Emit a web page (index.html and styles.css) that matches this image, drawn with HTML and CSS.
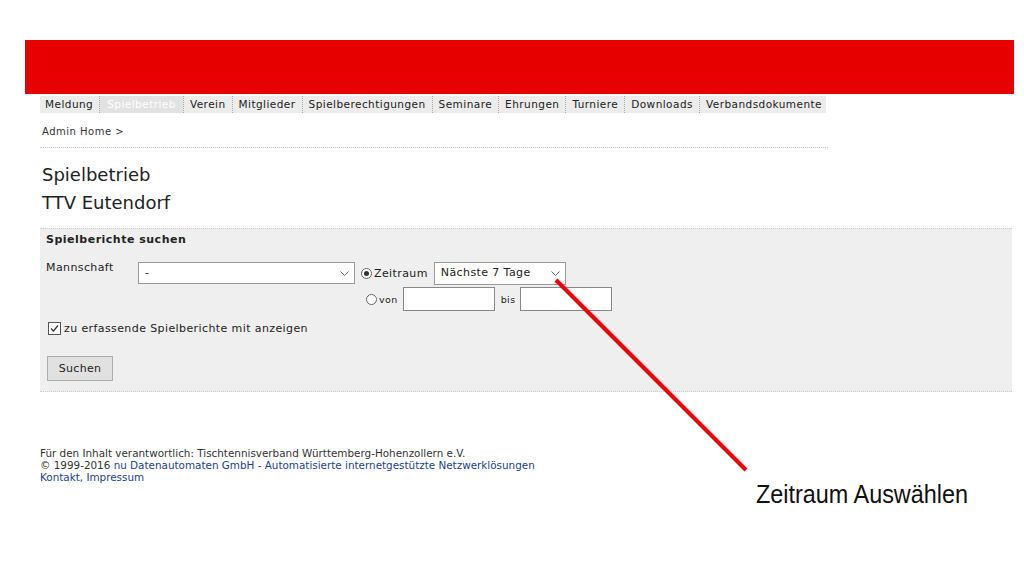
FILE: index.html
```html
<!DOCTYPE html>
<html lang="de">
<head>
    <meta charset="UTF-8">
    <title>Spielbetrieb - TTV Eutendorf</title>
    <link rel="stylesheet" href="styles.css">
</head>
<body>
    <div class="page">
        <div class="banner"></div>
        <div class="content">
            <ul class="nav">
                <li>Meldung</li>
                <li class="active">Spielbetrieb</li>
                <li>Verein</li>
                <li>Mitglieder</li>
                <li>Spielberechtigungen</li>
                <li>Seminare</li>
                <li>Ehrungen</li>
                <li>Turniere</li>
                <li>Downloads</li>
                <li>Verbandsdokumente</li>
            </ul>
            <div class="breadcrumb">Admin Home &gt;</div>

            <h1 class="title">Spielbetrieb<br>TTV Eutendorf</h1>

            <div class="search-box">
                <h2>Spielberichte suchen</h2>
                <div class="search-row">
                    <span class="label">Mannschaft</span>
                    <div class="select wide">-
                        <svg class="chev" width="9" height="6" viewBox="0 0 9 6"><path d="M0.5 0.5 L4.5 4.5 L8.5 0.5" fill="none" stroke="#666" stroke-width="1"/></svg>
                    </div>
                    <div class="period">
                        <div class="period-line">
                            <span class="radio checked"></span>
                            <span class="small">Zeitraum</span>
                            <div class="select period-select">Nächste 7 Tage
                                <svg class="chev" width="9" height="6" viewBox="0 0 9 6"><path d="M0.5 0.5 L4.5 4.5 L8.5 0.5" fill="none" stroke="#666" stroke-width="1"/></svg>
                            </div>
                        </div>
                        <div class="period-line second">
                            <span class="radio"></span>
                            <span class="tiny">von</span>
                            <div class="textbox"></div>
                            <span class="tiny bis">bis</span>
                            <div class="textbox"></div>
                        </div>
                    </div>
                </div>
                <div class="check-row">
                    <span class="checkbox">
                        <svg width="11" height="11" viewBox="0 0 11 11"><path d="M2 5.5 L4.5 8 L9 2.5" fill="none" stroke="#333" stroke-width="1.2"/></svg>
                    </span>
                    zu erfassende Spielberichte mit anzeigen
                </div>
                <div class="button-row">
                    <button class="btn">Suchen</button>
                </div>
            </div>

            <div class="footer">
                <div>Für den Inhalt verantwortlich: Tischtennisverband Württemberg-Hohenzollern e.V.</div>
                <div><span class="dark">© 1999-2016</span> nu Datenautomaten GmbH - Automatisierte internetgestützte Netzwerklösungen</div>
                <div>Kontakt, Impressum</div>
            </div>
        </div>

        <svg class="pointer" width="1024" height="576" viewBox="0 0 1024 576">
            <line x1="556" y1="280" x2="746" y2="470" stroke="#f00000" stroke-width="4"/>
        </svg>
        <div class="note">Zeitraum Auswählen</div>
    </div>
</body>
</html>
```
FILE: styles.css
```css
body {
    margin: 0;
    background: #fff;
    font-family: "DejaVu Sans", Verdana, sans-serif;
    color: #222;
}

.page {
    position: relative;
    width: 1024px;
    height: 576px;
    padding-top: 40px;
    box-sizing: border-box;
    overflow: hidden;
}

.banner {
    margin-left: 25px;
    width: 989px;
    height: 54px;
    background-color: #e60000;
}

.content {
    padding-left: 40px;
}

.nav {
    display: flex;
    list-style: none;
    margin: 2px 0 0 0;
    padding: 0;
    width: 786px;
    height: 17px;
    background-color: #ececec;
    font-size: 10.5px;
    letter-spacing: 0.45px;
    line-height: 17px;
}

.nav li {
    padding: 0 6px;
    border-left: 1px dotted #aaa;
    color: #222;
}

.nav li:first-child {
    border-left: none;
    padding-left: 5px;
}

.nav li.active {
    color: #fff;
    background-color: #e2e2e2;
    padding: 0 7px;
}

.breadcrumb {
    width: 786px;
    font-size: 10px;
    letter-spacing: 0.5px;
    color: #333;
    padding: 13px 0 10px 2px;
    border-bottom: 1px dotted #ccc;
}

.title {
    margin: 13px 0 0 2px;
    font-weight: normal;
    font-size: 18px;
    line-height: 28px;
    color: #222;
}

.search-box {
    margin-top: 11px;
    width: 972px;
    height: 164px;
    background-color: #efefef;
    border-top: 1px dotted #ccc;
    border-bottom: 1px dotted #ccc;
    box-sizing: border-box;
    padding: 3px 6px;
    font-size: 11px;
    letter-spacing: 0.4px;
}

.search-box h2 {
    margin: 0;
    font-size: 11px;
    font-weight: bold;
    letter-spacing: 0.5px;
    line-height: 16px;
}

.search-row {
    display: flex;
    align-items: flex-start;
    margin-top: 12px;
}

.label {
    width: 92px;
    line-height: 22px;
    margin-top: -3px;
}

.select {
    position: relative;
    height: 22px;
    box-sizing: border-box;
    background: #fff;
    border: 1px solid #999;
    padding-left: 6px;
    line-height: 20px;
    margin-top: 2px;
}

.select.wide {
    width: 217px;
}

.chev {
    position: absolute;
    right: 5px;
    top: 8px;
}

.period {
    margin-left: 6px;
}

.period-line {
    display: flex;
    align-items: center;
    height: 26px;
}

.period-line.second {
    margin-left: 5px;
}

.radio {
    display: inline-block;
    width: 11px;
    height: 11px;
    border: 1px solid #666;
    border-radius: 50%;
    background: #fff;
    box-sizing: border-box;
    position: relative;
}

.radio.checked::after {
    content: "";
    position: absolute;
    left: 2px;
    top: 2px;
    width: 5px;
    height: 5px;
    border-radius: 50%;
    background: #333;
}

.small {
    margin: 0 6px 0 2px;
}

.tiny {
    font-size: 9.5px;
    margin: 0 5px 0 2px;
}

.tiny.bis {
    margin: 0 5px 0 6px;
}

.period-select {
    width: 132px;
    height: 23px;
    margin-top: 0;
}

.textbox {
    width: 92px;
    height: 24px;
    background: #fff;
    border: 1px solid #888;
    box-sizing: border-box;
}

.check-row {
    display: flex;
    align-items: center;
    margin-top: 10px;
}

.checkbox {
    display: inline-flex;
    width: 11px;
    height: 11px;
    border: 1px solid #555;
    background: #fff;
    margin: 0 3px 0 2px;
}

.button-row {
    margin-top: 21px;
}

.btn {
    font-family: "DejaVu Sans", Verdana, sans-serif;
    font-size: 11px;
    letter-spacing: 0.3px;
    width: 66px;
    height: 25px;
    margin-left: 1px;
    background: #e1e1e1;
    border: 1px solid #adadad;
    color: #222;
}

.footer {
    margin-top: 55px;
    font-size: 10.4px;
    line-height: 12px;
    color: #1a3f8c;
}

.footer div:first-child,
.footer .dark {
    color: #333;
}

.pointer {
    position: absolute;
    left: 0;
    top: 0;
}

.note {
    position: absolute;
    left: 756px;
    top: 479px;
    font-family: "Liberation Sans", Arial, sans-serif;
    font-size: 26px;
    color: #111;
    transform: scaleX(0.9);
    transform-origin: left;
}
```
